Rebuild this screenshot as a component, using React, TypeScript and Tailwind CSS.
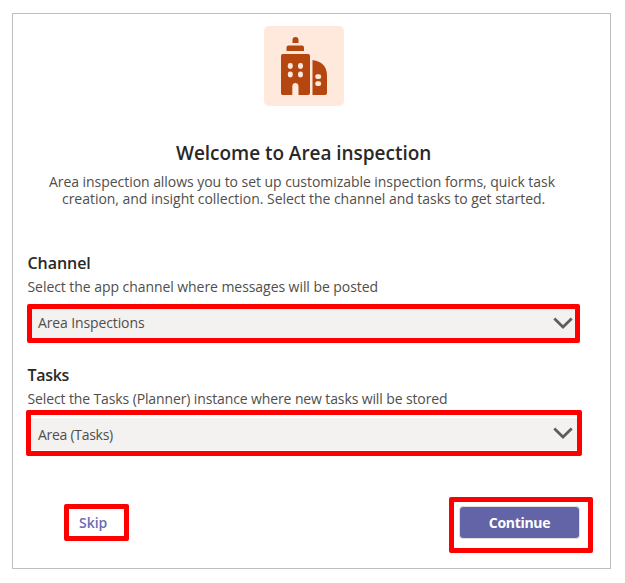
import type { ReactNode } from 'react';

function Line({ className, children }: { className: string; children: ReactNode }) {
  return <span className={`block w-fit whitespace-nowrap ${className}`}>{children}</span>;
}

function BuildingIcon() {
  return (
    <svg className="block size-20" viewBox="0 0 80 80" fill="#b5460f">
      <path d="M28.500 17V14Q28.500 11 31.500 11Q34.500 11 34.500 14V17Z" />
      <path d="M22.500 25V21.500Q22.500 19.500 24.500 19.500H38Q40 19.500 40 21.500V25Z" />
      <path
        fillRule="evenodd"
        d="M18.500 28H44Q46 28 46 30V67Q46 69 44 69H34.500V60.500Q34.500 57 31.300 57Q28.300 57 28.300 60.500V69H18.500Q17 69 17 67V30Q17 28 18.500 28Z"
      />
      <path d="M48.500 34Q62.500 36 63 49V67Q63 69 61 69H48.500Z" />
      <g fill="#ffe8dc">
        <rect x="23.800" y="37" width="5" height="6" rx="2.400" />
        <rect x="34" y="37" width="5" height="6" rx="2.400" />
        <rect x="23.800" y="45.500" width="5" height="6" rx="2.400" />
        <rect x="34" y="45.500" width="5" height="6" rx="2.400" />
        <rect x="51.200" y="48.200" width="6" height="4.800" rx="2.300" />
        <rect x="51.200" y="55.200" width="6" height="4.800" rx="2.300" />
      </g>
    </svg>
  );
}

function Chevron() {
  return (
    <svg className="mb-[2px] h-3 w-5" viewBox="0 0 20 12" fill="none" stroke="#605e5c" strokeWidth="2.8">
      <path d="M1.300 1.500L10 10L18.700 1.500" />
    </svg>
  );
}

export default function App() {
  return (
    <div className="h-[583px] w-[625px] bg-white pt-[13px] pl-3 font-['Open_Sans','Noto_Sans',sans-serif] text-[#504e4c]">
      <main className="flex h-[556px] w-[599px] flex-col border border-[#bfbfbf] text-[14px] leading-[17px]">
        <div className="mt-3 ml-[251px] size-20 overflow-hidden rounded-[5px] bg-[#ffe8dc]">
          <BuildingIcon />
        </div>
        <h1 className="mt-[35px] ml-[163px] h-6 text-[19px] leading-6 font-semibold text-[#292827]">
          <Line className="tracking-[-0.04px]">Welcome to Area inspection</Line>
        </h1>
        <p className="mt-[8px] h-[34px]">
          <Line className="ml-9 tracking-[-0.05px]">Area inspection allows you to set up customizable inspection forms, quick task</Line>
          <Line className="ml-[49px] tracking-[-0.035px]">creation, and insight collection. Select the channel and tasks to get started.</Line>
        </p>

        <section className="mt-[46px] h-[90px]">
          <h2 className="ml-[14.5px] h-5 text-[16px] leading-5 font-semibold text-[#292827]">
            <Line className="tracking-[-0.05px]">Channel</Line>
          </h2>
          <p className="mt-[5px] ml-[14.5px] h-[17px]">
            <Line className="tracking-[-0.06px]">Select the app channel where messages will be posted</Line>
          </p>
          <div className="mt-[9px] ml-[14px] flex h-[39px] w-[553px] items-center justify-between rounded-[2px] border-[5px] border-[#ff0000] bg-[#f3f2f1] pr-[2px] pl-[6px]">
            <Line className="mb-0.5 tracking-[-0.12px]">Area Inspections</Line>
            <Chevron />
          </div>
        </section>

        <section className="mt-[22px] h-[91px]">
          <h2 className="ml-[14.5px] h-5 text-[16px] leading-5 font-semibold text-[#292827]">
            <Line className="tracking-[-0.3px]">Tasks</Line>
          </h2>
          <p className="mt-[5px] ml-[14.5px] h-[17px]">
            <Line className="tracking-[-0.12px]">Select the Tasks (Planner) instance where new tasks will be stored</Line>
          </p>
          <div className="mt-[3px] ml-[13px] h-[46px] w-[556px] rounded-[2px] border-[5px] border-[#ff0000] pt-[3px]">
            <div className="flex h-8 items-center justify-between bg-[#f3f2f1] pr-[4px] pl-[7px]">
              <Line className="tracking-[-0.28px]">Area (Tasks)</Line>
              <Chevron />
            </div>
          </div>
        </section>

        <footer className="mt-[41px] flex h-14 items-start">
          <button className="mt-[7px] ml-[51px] h-[37px] w-[65px] rounded-[2px] border-[5px] border-[#ff0000] pl-[10px] font-semibold text-[#6e6ab0]">
            <Line className="">Skip</Line>
          </button>
          <div className="ml-[320px] h-14 w-36 rounded-[2px] border-[5px] border-[#ff0000] pt-1 pl-[5px]">
            <button className="flex h-[33px] w-[121px] items-center justify-center rounded-[4px] border border-[#e1dfdd] bg-[#6264a7] font-bold text-white">
              <Line className="tracking-[-0.3px]">Continue</Line>
            </button>
          </div>
        </footer>
      </main>
    </div>
  );
}
